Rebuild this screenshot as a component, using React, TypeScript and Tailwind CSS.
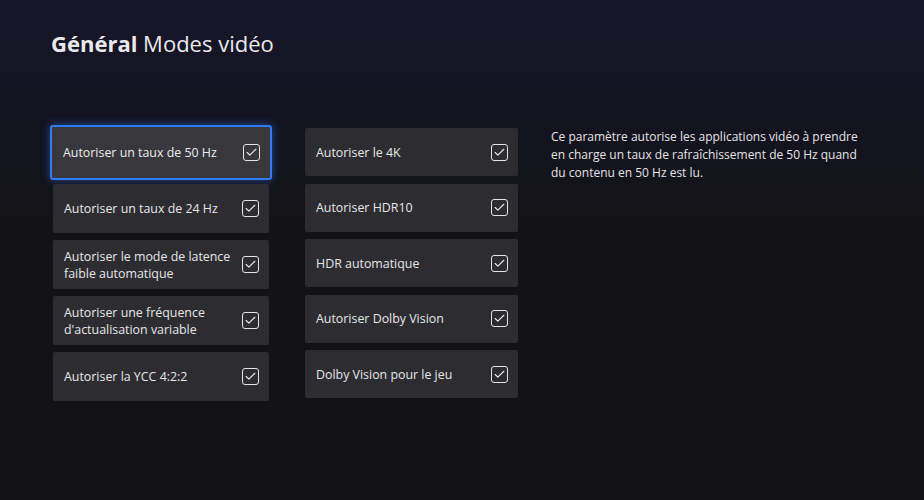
import { Check } from "lucide-react";

type Option = {
  label: string;
  focused?: boolean;
};

const leftOptions: Option[] = [
  { label: "Autoriser un taux de 50 Hz", focused: true },
  { label: "Autoriser un taux de 24 Hz" },
  { label: "Autoriser le mode de latence faible automatique" },
  { label: "Autoriser une fréquence d'actualisation variable" },
  { label: "Autoriser la YCC 4:2:2" },
];

const rightOptions: Option[] = [
  { label: "Autoriser le 4K" },
  { label: "Autoriser HDR10" },
  { label: "HDR automatique" },
  { label: "Autoriser Dolby Vision" },
  { label: "Dolby Vision pour le jeu" },
];

function CheckBox() {
  return (
    <span className="flex h-[17px] w-[17px] shrink-0 items-center justify-center rounded-[3px] border-[1.5px] border-[#e4e4e6]">
      <Check size={13} strokeWidth={2} className="text-[#ececee]" />
    </span>
  );
}

function Tile({ option, tall }: { option: Option; tall?: boolean }) {
  if (option.focused) {
    return (
      <div className="-mx-[3px] -my-[3px] flex h-[55px] items-center justify-between rounded-[3px] border-[2.5px] border-[#2f7bf0] bg-[#37373c] pl-[11px] pr-[10px] shadow-[0_0_8px_rgba(40,120,255,0.55)]">
        <span className="text-[12.4px] leading-[17px] text-[#ededef]">{option.label}</span>
        <CheckBox />
      </div>
    );
  }
  return (
    <div
      className={`flex items-center justify-between rounded-[2px] bg-[#2d2d31] pl-[11px] pr-[10px] ${
        tall ? "h-[49px]" : "h-[48px]"
      }`}
    >
      <span className="max-w-[170px] text-[12.4px] leading-[17px] text-[#e6e6e8]">{option.label}</span>
      <CheckBox />
    </div>
  );
}

export default function App() {
  return (
    <div
      className="h-[500px] w-[924px] overflow-hidden bg-[linear-gradient(180deg,#17162a_0%,#141420_22%,#131317_45%,#121215_100%)] pl-[51px] pt-[28px]"
      style={{ fontFamily: "'Open Sans', 'Noto Sans', sans-serif" }}
    >
      <h1 className="text-[22px] leading-[30px] text-[#e9e9ec]">
        <span className="font-bold">Général</span> Modes vidéo
      </h1>

      <div className="mt-[70px] flex items-start">
        <div className="ml-[2px] flex w-[216px] flex-col gap-[7px]">
          {leftOptions.map((o) => (
            <Tile key={o.label} option={o} tall />
          ))}
        </div>

        <div className="ml-[36px] flex w-[213px] flex-col gap-[7.5px]">
          {rightOptions.map((o) => (
            <Tile key={o.label} option={o} />
          ))}
        </div>

        <p className="ml-[33px] w-[320px] text-[12px] leading-[18px] text-[#e4e4e6]">
          Ce paramètre autorise les applications vidéo à prendre en charge un taux de rafraîchissement de 50 Hz quand
          du contenu en 50 Hz est lu.
        </p>
      </div>
    </div>
  );
}
